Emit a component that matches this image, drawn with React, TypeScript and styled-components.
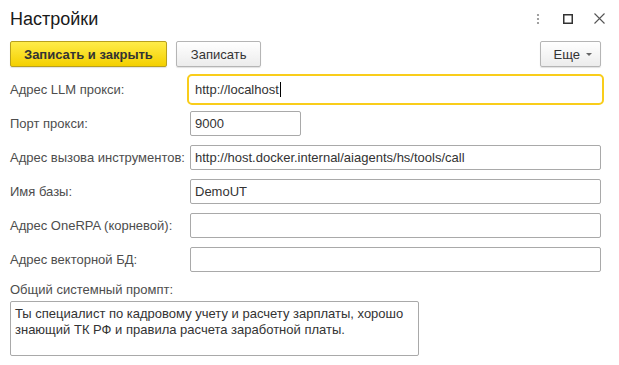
import styled, { createGlobalStyle } from "styled-components";

const GlobalStyle = createGlobalStyle`
  html, body {
    margin: 0;
    padding: 0;
    background: #ffffff;
  }
  body {
    font-family: "Liberation Sans", Arial, sans-serif;
    font-size: 13px;
    color: #4d4d4d;
  }
`;

const Window = styled.div`
  width: 619px;
  height: 365px;
  box-sizing: border-box;
  padding: 0 18px 0 10px;
  background: #fff;
`;

const Header = styled.div`
  display: flex;
  align-items: center;
  justify-content: space-between;
  height: 37px;
`;

const Title = styled.h1`
  margin: 0;
  font-size: 18px;
  font-weight: normal;
  color: #1a1a1a;
  line-height: 20px;
`;

const WinButtons = styled.div`
  display: flex;
  align-items: center;
  margin-right: -4px;
`;

const WinIcon = styled.svg<{ $gap?: number }>`
  display: block;
  margin-left: ${(p) => p.$gap ?? 0}px;
`;

const Toolbar = styled.div`
  display: flex;
  align-items: center;
  gap: 9px;
  margin-top: 4px;
  height: 26px;
`;

const Button = styled.button<{ $primary?: boolean; $menu?: boolean }>`
  height: 26px;
  box-sizing: border-box;
  padding: ${(p) => (p.$menu ? "0 8px 0 13px" : p.$primary ? "0 13px" : "0 14px")};
  border-radius: 2px;
  font-family: "Liberation Sans", Arial, sans-serif;
  font-size: 13px;
  font-weight: ${(p) => (p.$primary ? "bold" : "normal")};
  color: #333;
  border: 1px solid ${(p) => (p.$primary ? "#b8a01e" : "#b5b5b5")};
  background: ${(p) =>
    p.$primary
      ? "linear-gradient(#ffec4a, #f4d000)"
      : "linear-gradient(#ffffff, #ececec)"};
  box-shadow: 0 1px 1px rgba(0, 0, 0, 0.12);
  display: flex;
  align-items: center;
  gap: 6px;
`;

const Spacer = styled.div`
  flex: 1;
`;

const Caret = styled.span`
  display: inline-block;
  width: 0;
  height: 0;
  border-left: 3px solid transparent;
  border-right: 3px solid transparent;
  border-top: 3px solid #666;
  margin-top: 1px;
`;

const Form = styled.div`
  display: grid;
  grid-template-columns: 180px 1fr;
  row-gap: 9px;
  margin-top: 10px;
  align-items: center;
`;

const Label = styled.label`
  color: #4d4d4d;
  font-size: 13px;
  line-height: 16px;
  white-space: nowrap;
`;

const Input = styled.div<{ $width?: number; $focused?: boolean }>`
  height: 25px;
  box-sizing: border-box;
  width: ${(p) => (p.$width ? `${p.$width}px` : "100%")};
  border: 1px solid ${(p) => (p.$focused ? "#fff" : "#a9a9a9")};
  border-radius: 2px;
  padding: 0 4px;
  display: flex;
  align-items: center;
  color: #333;
  font-size: 13px;
  outline: ${(p) => (p.$focused ? "2px solid #f9cd1a" : "none")};
  outline-offset: 1px;
`;

const CursorMark = styled.span`
  display: inline-block;
  width: 1px;
  height: 15px;
  background: #000;
  margin-left: 1px;
`;

const PromptBlock = styled.div`
  margin-top: 10px;
`;

const PromptLabel = styled(Label)`
  display: block;
  margin-bottom: 3px;
`;

const TextArea = styled.div`
  width: 409px;
  height: 55px;
  box-sizing: border-box;
  border: 1px solid #a9a9a9;
  border-radius: 2px;
  padding: 4px;
  color: #333;
  font-size: 13px;
  line-height: 16px;
`;

const fields = [
  { label: "Порт прокси:", value: "9000", width: 111 },
  { label: "Адрес вызова инструментов:", value: "http://host.docker.internal/aiagents/hs/tools/call" },
  { label: "Имя базы:", value: "DemoUT" },
  { label: "Адрес OneRPA (корневой):", value: "" },
  { label: "Адрес векторной БД:", value: "" },
];

export default function App() {
  return (
    <>
      <GlobalStyle />
      <Window>
        <Header>
          <Title>Настройки</Title>
          <WinButtons>
            <WinIcon width="4" height="12" viewBox="0 0 4 12">
              <circle cx="2" cy="2" r="1.1" fill="#8a8a8a" />
              <circle cx="2" cy="6" r="1.1" fill="#8a8a8a" />
              <circle cx="2" cy="10" r="1.1" fill="#8a8a8a" />
            </WinIcon>
            <WinIcon $gap={23} width="10" height="10" viewBox="0 0 10 10">
              <rect x="0.75" y="0.75" width="8.5" height="8.5" fill="none" stroke="#333" strokeWidth="1.5" />
            </WinIcon>
            <WinIcon $gap={21} width="11" height="11" viewBox="0 0 11 11">
              <path d="M0.5 0.5 L10.5 10.5 M10.5 0.5 L0.5 10.5" stroke="#555" strokeWidth="1.1" />
            </WinIcon>
          </WinButtons>
        </Header>
        <Toolbar>
          <Button $primary>Записать и закрыть</Button>
          <Button>Записать</Button>
          <Spacer />
          <Button $menu>
            Еще <Caret />
          </Button>
        </Toolbar>
        <Form>
          <Label>Адрес LLM прокси:</Label>
          <Input $focused>
            http://localhost
            <CursorMark />
          </Input>
          {fields.map((f) => (
            <>
              <Label key={f.label + "l"}>{f.label}</Label>
              <Input key={f.label + "i"} $width={f.width}>
                {f.value}
              </Input>
            </>
          ))}
        </Form>
        <PromptBlock>
          <PromptLabel>Общий системный промпт:</PromptLabel>
          <TextArea>
            Ты специалист по кадровому учету и расчету зарплаты, хорошо знающий ТК РФ и правила
            расчета заработной платы.
          </TextArea>
        </PromptBlock>
      </Window>
    </>
  );
}
